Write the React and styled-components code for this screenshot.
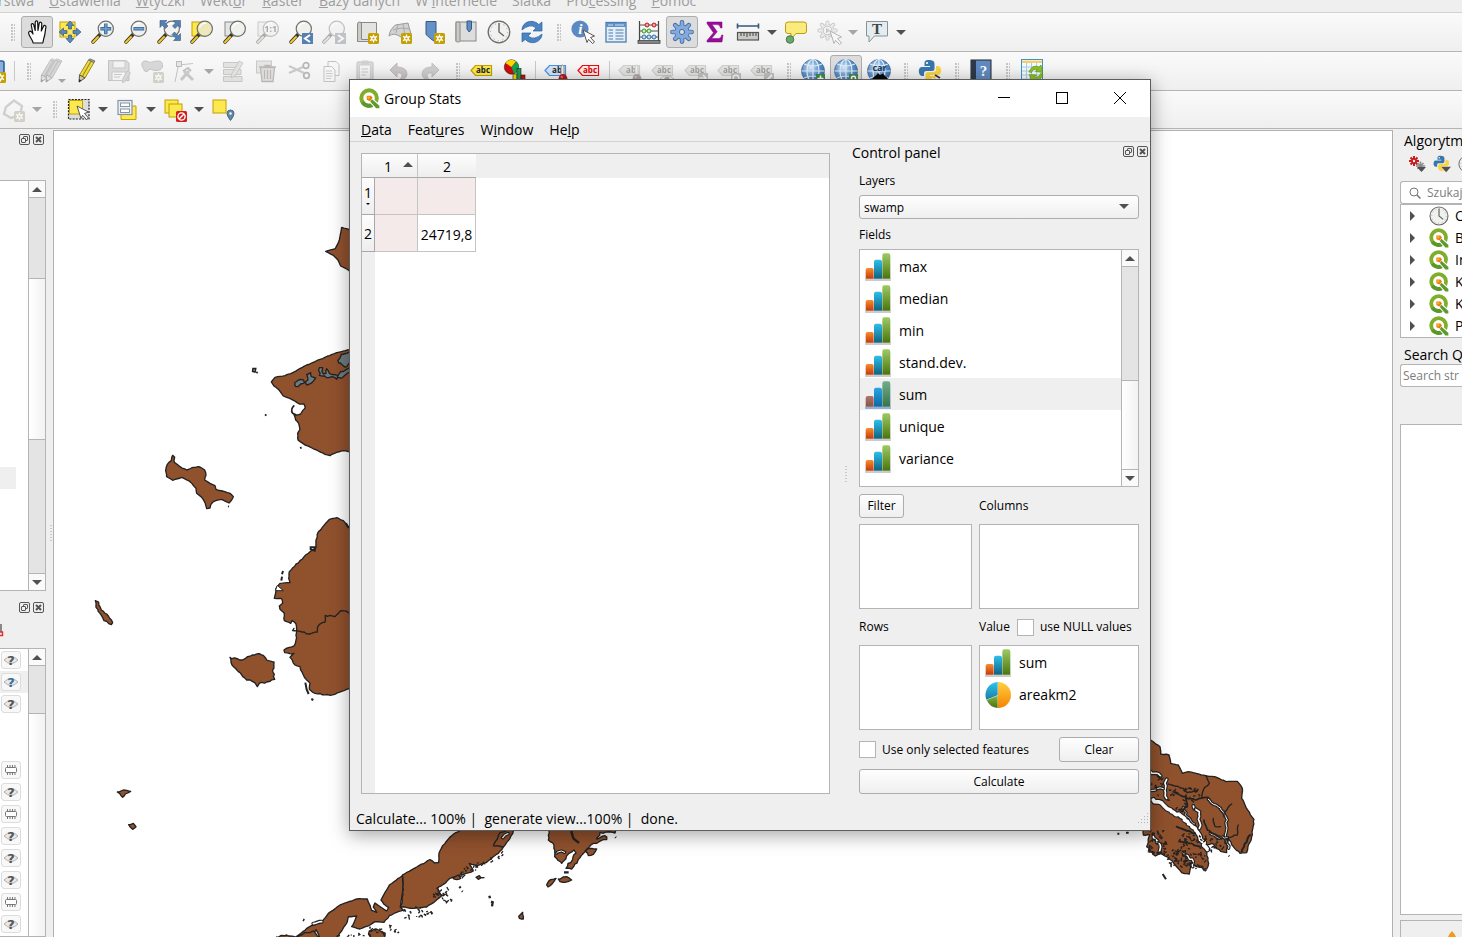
import React from "react";
import styled, { createGlobalStyle, css } from "styled-components";

const UI_FONT = '"Open Sans", "Noto Sans", "Liberation Sans", sans-serif';

const GlobalStyle = createGlobalStyle`
  *, *::before, *::after { box-sizing: border-box; }
  html, body { margin: 0; height: 100%; overflow: hidden; }
  body { background: #efefef; color: #000; font: 14px/20px ${UI_FONT}; }
  button, input, select { font: inherit; color: inherit; margin: 0; }
  ul { list-style: none; margin: 0; padding: 0; }
  svg { flex: none; }
`;

/* ---------- main window ---------- */

const Desktop = styled.div`
  position: relative;
  display: flex;
  flex-direction: column;
  height: 100vh;
  overflow: hidden;
`;

const AppMenu = styled.nav`
  display: flex;
  align-items: flex-end;
  gap: 15px;
  height: 13px;
  padding-bottom: 1px;
  border-bottom: 1px solid #d2d2d2;
  overflow: hidden;
  color: #9c9c9c;
  flex: none;
  white-space: nowrap;
`;

const AppMenuItem = styled.a`
  color: inherit;
  text-decoration: none;
`;

const ClippedMenuItem = styled(AppMenuItem)`
  display: flex;
  justify-content: flex-end;
  width: 34px;
`;

const Toolbar = styled.div`
  display: flex;
  align-items: center;
  flex: none;
  height: ${(p) => p.$height || 39}px;
  padding-left: ${(p) => p.$inset || 0}px;
  border-bottom: 1px solid #b4b4b4;
  background: linear-gradient(#fafafa, #efefef);
`;

const Cell = styled.div`
  display: flex;
  justify-content: ${(p) => (p.$clip ? "flex-end" : "center")};
  width: ${(p) => p.$clip || 33}px;
  overflow: hidden;
  flex: none;
`;

const ToolButton = styled.button`
  display: flex;
  align-items: center;
  justify-content: center;
  flex: none;
  width: 32px;
  height: 32px;
  padding: 0;
  border: 1px solid transparent;
  border-radius: 3px;
  background: none;
  ${(p) =>
    p.$active &&
    css`
      border-color: #adadad;
      background: #dcdcdc;
    `}
  &:disabled svg {
    filter: grayscale(0.85);
    opacity: 0.4;
  }
`;

const ArrowButton = styled.button`
  width: 15px;
  height: 30px;
  padding: 0;
  border: 0;
  background: none;
  display: flex;
  align-items: center;
  justify-content: center;
  flex: none;
  color: #505050;
  &:disabled { color: #a6a6a6; }
`;

const Grip = styled.span`
  flex: none;
  width: 4px;
  height: 17px;
  margin: 0 5px 0 9px;
  background: radial-gradient(circle at 1px 1px, #c6c6c6 1px, transparent 1px) 0 0 / 3px 3px;
`;

const Separator = styled.span`
  flex: none;
  width: 1px;
  height: 20px;
  margin: 0 3px 0 4px;
  background: #c8c8c8;
`;

const Body = styled.div`
  display: flex;
  flex: 1;
  min-height: 0;
`;

const MapCanvas = styled.main`
  flex: 1;
  min-width: 0;
  margin-top: 1px;
  border: 1px solid #b0b0b0;
  border-bottom: 0;
  background: #fff;
  overflow: hidden;
`;

const Dock = styled.aside`
  display: flex;
  flex-direction: column;
  flex: none;
  width: ${(p) => p.$width}px;
  overflow: hidden;
  white-space: nowrap;
`;

const LeftDockRow = styled.div`
  display: flex;
  align-items: center;
  flex: 1;
  min-height: 0;
`;

const LeftDockColumn = styled.div`
  display: flex;
  flex-direction: column;
  width: 46px;
  height: 100%;
`;

const DockHeader = styled.header`
  display: flex;
  flex-direction: column;
  justify-content: space-between;
  flex: none;
  height: ${(p) => p.$height}px;
  padding-top: ${(p) => p.$top}px;
  padding-left: ${(p) => p.$left || 0}px;
`;

const DockActions = styled.div`
  display: flex;
  justify-content: flex-end;
  gap: 3px;
  padding-right: 2px;
`;

const MiniButton = styled.button`
  display: flex;
  padding: 0;
  border: 0;
  background: none;
`;

const TreeFrame = styled.div`
  display: flex;
  flex: ${(p) => (p.$height ? `0 0 ${p.$height}px` : "1")};
  border: 1px solid #b4b4b4;
  border-left: 0;
  background: #fff;
  min-height: 0;
`;

const TreeBody = styled.ul`
  flex: 1;
  min-width: 0;
  overflow: hidden;
  padding-top: ${(p) => p.$top || 0}px;
`;

const SelectedStub = styled.li`
  width: 16px;
  height: 22px;
  background: #efefef;
`;

const AlgRow = styled.li`
  display: flex;
  align-items: center;
  height: 22px;
  padding-left: 1px;
  background: ${(p) => (p.$selected ? "#efefef" : "none")};
`;

const AlgButton = styled.button`
  display: flex;
  align-items: center;
  justify-content: center;
  width: 20px;
  height: 18px;
  padding: 0;
  border: 1px solid #dcdcdc;
  border-radius: 3px;
  background: #f8f8f8;
`;

/* ---------- scroll bar ---------- */

const ScrollTrack = styled.div`
  display: flex;
  flex-direction: column;
  flex: none;
  width: 17px;
  border-left: 1px solid #b4b4b4;
  background: #e4e4e4;
`;

const ScrollButton = styled.button`
  display: flex;
  align-items: center;
  justify-content: center;
  flex: none;
  height: 16px;
  padding: 0;
  border: 0;
  color: #505050;
  background: #fafafa;
`;

const ScrollGap = styled.span`
  flex: ${(p) => p.$size};
  min-height: 0;
  border-top: 1px solid #b4b4b4;
`;

const ScrollThumb = styled.span`
  flex: ${(p) => p.$size};
  min-height: 0;
  border-top: 1px solid #b4b4b4;
  background: linear-gradient(90deg, #fff, #f2f2f2);
`;

function ScrollBar({ before, thumb, after, hideDown }) {
  return (
    <ScrollTrack>
      <ScrollButton type="button" aria-label="Scroll up"><Triangle up /></ScrollButton>
      <ScrollGap $size={before} />
      <ScrollThumb $size={thumb} />
      {after > 0 && <ScrollGap $size={after} />}
      {!hideDown && (
        <ScrollEnd>
          <ScrollButton type="button" aria-label="Scroll down"><Triangle /></ScrollButton>
        </ScrollEnd>
      )}
    </ScrollTrack>
  );
}

const ScrollEnd = styled.div`
  display: grid;
  flex: none;
  border-top: 1px solid #b4b4b4;
`;

const SplitterDots = styled.span`
  flex: none;
  width: 2px;
  height: 17px;
  margin-left: ${(p) => p.$left || 0}px;
  background: repeating-linear-gradient(#c8c8c8 0 1px, transparent 1px 3px);
`;

/* ---------- right dock ---------- */

const DockTitle = styled.h2`
  margin: 0;
  font: 14px/20px ${UI_FONT};
`;

const IconRow = styled.div`
  display: flex;
  align-items: center;
  gap: 7px;
  height: 29px;
  padding: 0 0 5px 15px;
`;

const SearchField = styled.div`
  display: flex;
  align-items: center;
  gap: 6px;
  flex: none;
  height: 23px;
  margin-left: 7px;
  padding-left: ${(p) => p.$pad}px;
  border: 1px solid #b4b4b4;
  border-right: 0;
  border-radius: 3px 0 0 3px;
  background: #fff;
`;

const BareInput = styled.input`
  width: 100%;
  min-width: 0;
  padding: 0;
  border: 0;
  outline: 0;
  background: none;
  font-size: 12px;
  &::placeholder { color: #7c7c7c; opacity: 1; }
`;

const Providers = styled.ul`
  flex: none;
  margin-left: 7px;
  border: 1px solid #b4b4b4;
  border-right: 0;
  background: #fff;
`;

const Provider = styled.li`
  display: flex;
  align-items: center;
  height: 22px;
  padding-left: 9px;
  svg + svg { margin: 0 6px 0 14px; }
`;

const Results = styled.div`
  flex: 1;
  margin: 37px 0 5px 7px;
  border: 1px solid #b4b4b4;
  border-right: 0;
  background: #fff;
`;

const LogTab = styled.div`
  display: flex;
  align-items: flex-end;
  justify-content: flex-end;
  flex: none;
  height: 17px;
  margin-left: 7px;
  padding-right: 5px;
  border: 1px solid #b4b4b4;
  border-width: 1px 0 0 1px;
  overflow: hidden;
`;

/* ---------- Group Stats window ---------- */

const Dialog = styled.section`
  position: absolute;
  left: 349px;
  top: 79px;
  width: 802px;
  height: 752px;
  display: flex;
  flex-direction: column;
  border: 1px solid #5c5c5c;
  background: #efefef;
  box-shadow: 0 4px 18px rgba(0, 0, 0, 0.36);
`;

const TitleBar = styled.header`
  display: flex;
  align-items: center;
  flex: none;
  gap: 4px;
  height: 37px;
  padding-left: 9px;
  background: #fff;
`;

const DialogTitle = styled.h1`
  flex: 1;
  margin: 0;
  font: 14px/20px ${UI_FONT};
`;

const WindowActions = styled.div`
  display: flex;
  align-self: flex-start;
  padding-right: 1px;
`;

const WindowButton = styled.button`
  display: flex;
  align-items: center;
  justify-content: center;
  width: 58px;
  height: 36px;
  padding: 0;
  border: 0;
  background: none;
`;

const DialogMenu = styled.nav`
  display: flex;
  align-items: center;
  flex: none;
  gap: 16px;
  height: 25px;
  padding: 2px 0 0 11px;
  border-bottom: 1px solid #d2d2d2;
`;

const DialogMenuItem = styled.a`
  color: inherit;
  text-decoration: none;
`;

const Workspace = styled.div`
  display: flex;
  align-items: center;
  flex: 1;
  min-height: 0;
`;

const TableFrame = styled.div`
  align-self: stretch;
  flex: 1;
  margin: 11px 0 13px 11px;
  border: 1px solid #b4b4b4;
  background:
    linear-gradient(#efefef, #efefef) 0 0 / 100% 24px no-repeat,
    linear-gradient(#efefef, #efefef) 0 0 / 13px 100% no-repeat,
    #fff;
`;

const StatsTable = styled.table`
  border-collapse: separate;
  border-spacing: 0;
  table-layout: fixed;
  width: 114px;
`;

const headerCell = css`
  padding: 0;
  font-weight: 400;
  border: 0 solid #a8a8a8;
  background: linear-gradient(#fdfdfd, #eee);
`;

const ColHead = styled.th`
  ${headerCell}
  width: ${(p) => p.$width}px;
  height: 24px;
  border-bottom-width: 1px;
  border-right: ${(p) => (p.$last ? "0" : "1px solid #c4c4c4")};
`;

const HeadContent = styled.div`
  display: flex;
  align-items: center;
  justify-content: flex-end;
  gap: 11px;
  padding: 2px 4px 0 0;
  svg { color: #505050; margin-bottom: 4px; }
`;

const PlainHead = styled.div`
  padding-top: 2px;
`;

const CornerHead = styled.td`
  ${headerCell}
  width: 13px;
  border-bottom-width: 1px;
`;

const RowHead = styled.th`
  ${headerCell}
  height: 37px;
  border-width: 0 1px 1px 0;
`;

const RowHeadContent = styled.div`
  display: flex;
  flex-direction: column;
  align-items: center;
  padding-bottom: 4px;
`;

const DataCell = styled.td`
  height: 37px;
  padding: 1px 0 0;
  text-align: center;
  border: 0 solid #c4c4c4;
  border-width: 0 1px 1px 0;
  background: ${(p) => (p.$tinted ? "#f5eaea" : "#fff")};
`;

const ControlPanel = styled.aside`
  align-self: stretch;
  display: flex;
  flex-direction: column;
  flex: none;
  width: 303px;
  font-size: 12px;
`;

const PanelHeader = styled.header`
  display: flex;
  align-items: flex-start;
  justify-content: space-between;
  height: 20px;
  padding-left: 5px;
  margin: 1px 0 8px;
`;

const PanelActions = styled.div`
  padding-top: 3px;
`;

const PanelForm = styled.form`
  display: flex;
  flex-direction: column;
  padding: 0 11px 0 12px;
`;

const Caption = styled.label`
  line-height: 20px;
`;

const SelectWrap = styled.div`
  position: relative;
  display: flex;
  margin: 4px 0 6px;
`;

const LayerSelect = styled.select`
  appearance: none;
  width: 100%;
  height: 24px;
  padding: 2px 4px 0;
  border: 1px solid #adadad;
  border-radius: 3px;
  background: linear-gradient(#fefefe, #efefef);
`;

const SelectArrow = styled.span`
  position: absolute;
  right: 10px;
  top: 9px;
  display: flex;
  color: #505050;
  pointer-events: none;
`;

const FieldsFrame = styled.div`
  display: flex;
  height: 238px;
  margin-top: 4px;
  border: 1px solid #b4b4b4;
  background: #fff;
`;

const FieldList = styled.ul`
  flex: 1;
  font-size: 14px;
`;

const Field = styled.li`
  display: flex;
  align-items: center;
  gap: 8px;
  height: 32px;
  padding: 2px 0 0 5px;
  background: ${(p) => (p.$selected ? "#efefef" : "none")};
`;

const DropGrid = styled.div`
  display: grid;
  grid-template-columns: 113px 1fr;
  column-gap: 7px;
  margin-top: 7px;
`;

const DropHead = styled.div`
  display: flex;
  align-items: center;
  gap: 7px;
  height: ${(p) => p.$height}px;
  padding-bottom: ${(p) => p.$below || 0}px;
  white-space: nowrap;
`;

const DropBox = styled.ul`
  height: 85px;
  border: 1px solid #b4b4b4;
  background: #fff;
  font-size: 14px;
`;

const PushButton = styled.button`
  height: ${(p) => p.$height || 25}px;
  width: ${(p) => (p.$width ? `${p.$width}px` : "auto")};
  padding: 0;
  border: 1px solid #adadad;
  border-radius: 3px;
  background: linear-gradient(#fefefe, #efefef);
`;

const Check = styled.input`
  appearance: none;
  flex: none;
  width: 17px;
  height: 17px;
  border: 1px solid #b4b4b4;
  background: #fff;
`;

const CheckLabel = styled.label`
  display: flex;
  align-items: center;
  gap: 6px;
`;

const OptionRow = styled.div`
  display: flex;
  align-items: center;
  justify-content: space-between;
  margin: 7px 0;
`;

const StatusBar = styled.footer`
  display: flex;
  align-items: center;
  justify-content: space-between;
  flex: none;
  height: 23px;
  padding-left: 6px;
  white-space: pre;
`;

/* ---------- small glyphs ---------- */

function Triangle({ up, small }) {
  const w = small ? 4 : 10;
  return (
    <svg width={w} height={w / 2} viewBox="0 0 10 5" aria-hidden="true">
      <path d={up ? "M0 5L5 0L10 5Z" : "M0 0L10 0L5 5Z"} fill="currentColor" />
    </svg>
  );
}

function RightTriangle() {
  return (
    <svg width="5" height="10" viewBox="0 0 5 10" aria-hidden="true">
      <path d="M0 0L5 5L0 10Z" fill="#505050" />
    </svg>
  );
}

function FloatGlyph() {
  return (
    <svg width="11" height="11" viewBox="0 0 11 11" fill="none" stroke="#555" aria-hidden="true">
      <rect x=".5" y=".5" width="10" height="10" rx="1.5" />
      <rect x="4.5" y="2.5" width="4" height="4" rx=".5" />
      <rect x="2.5" y="4.5" width="4" height="4" rx=".5" fill="#efefef" />
    </svg>
  );
}

function CloseGlyph() {
  return (
    <svg width="11" height="11" viewBox="0 0 11 11" fill="none" stroke="#555" aria-hidden="true">
      <rect x=".5" y=".5" width="10" height="10" rx="1.5" />
      <path d="M3 3L8 8M8 3L3 8" strokeWidth="2" />
    </svg>
  );
}

function DockButtons() {
  return (
    <DockActions>
      <MiniButton type="button" aria-label="Float"><FloatGlyph /></MiniButton>
      <MiniButton type="button" aria-label="Close"><CloseGlyph /></MiniButton>
    </DockActions>
  );
}

function QLogo({ size = 20 }) {
  return (
    <svg width={size} height={size} viewBox="0 0 20 20" aria-hidden="true">
      <circle cx="9.6" cy="9.6" r="7.4" fill="none" stroke="#7fae2a" strokeWidth="3.8" />
      <path d="M3.4 13.7A7.4 7.4 0 0 0 14 15.5" fill="none" stroke="#5a982b" strokeWidth="3.8" />
      <path d="M9.5 9.3L13 9.5L19.7 16V19.8H15.4L9.6 13.2Z" fill="#fff" />
      <path d="M12.4 10.8L19.4 17V19.4H16.4L10.8 13Z" fill="#5c9a2c" />
      <path d="M7.4 7.4H11.4L13 9.4L10.6 12.6L7.4 11.2Z" fill="#ee7913" />
      <circle cx="9.2" cy="9.2" r="1.3" fill="#f4b01c" />
    </svg>
  );
}

function Bars({ tinted }) {
  const id = tinted ? "t" : "n";
  const c = tinted
    ? ["#a9776a", "#8d5348", "#27a6e8", "#0d67a0", "#6fae86", "#35744f", "#8fb0d8"]
    : ["#f58d32", "#c43c0c", "#2cc0ee", "#12627f", "#9ccb62", "#4a7410", "#cbcbcb"];
  return (
    <svg width="26" height="28" viewBox="0 0 78 84" aria-hidden="true">
      <defs>
        {[0, 2, 4].map((i) => (
          <linearGradient key={i} id={`bar${id}${i}`} x1="0" y1="0" x2="0" y2="1">
            <stop offset="0" stopColor={c[i]} />
            <stop offset="1" stopColor={c[i + 1]} />
          </linearGradient>
        ))}
      </defs>
      <rect x="0" y="77" width="78" height="7" rx="2" fill={c[6]} />
      <path d="M2 77V51Q2 45 8 45H21Q26 45 26 51V77Z" fill={`url(#bar${id}0)`} />
      <path d="M27 77V26Q27 20 33 20H45Q51 20 51 26V77Z" fill={`url(#bar${id}2)`} />
      <path d="M52 77V8Q52 1 58 1H70Q76 1 76 8V77Z" fill={`url(#bar${id}4)`} />
    </svg>
  );
}

function Pie() {
  return (
    <svg width="26" height="26" viewBox="0 0 78 78" aria-hidden="true">
      <defs>
        <linearGradient id="pieY" x1="0" y1="0" x2="0" y2="1"><stop offset="0" stopColor="#ffd042" /><stop offset="1" stopColor="#f58200" /></linearGradient>
        <linearGradient id="pieB" x1="0" y1="0" x2="0" y2="1"><stop offset="0" stopColor="#2fc3ee" /><stop offset="1" stopColor="#1b7ea6" /></linearGradient>
        <linearGradient id="pieG" x1="0" y1="0" x2="0" y2="1"><stop offset="0" stopColor="#87b540" /><stop offset="1" stopColor="#477010" /></linearGradient>
      </defs>
      <path d="M39 0A39 39 0 0 1 39 78Z" fill="url(#pieY)" />
      <path d="M38 0A39 39 0 0 0 4 53L38 40Z" fill="url(#pieB)" />
      <path d="M38 41V78A39 39 0 0 1 5 54Z" fill="url(#pieG)" />
    </svg>
  );
}

/* ---------- toolbar icons, 24 x 24 ---------- */

const Glass = ({ fill = "#eef1ec" }) => (
  <>
    <path d="M9 14.5L2 22" stroke="#3b3b2c" strokeWidth="3.6" strokeLinecap="round" />
    <path d="M7 17L2 22.2" stroke="#f4c62c" strokeWidth="2" strokeLinecap="round" />
    <circle cx="14.8" cy="8.8" r="7.6" fill={fill} stroke="#6f706c" strokeWidth="1.2" />
    <path d="M9.5 7.5A5.8 5.8 0 0 1 16 3.4" fill="none" stroke="#fff" strokeWidth="1.4" />
  </>
);

const Star = ({ x = 13, y = 13 }) => (
  <g transform={`translate(${x} ${y})`}>
    <rect width="11" height="11" rx="1.6" fill="#c4a000" />
    <path d="M5.5 1.4V9.6M2 3.4L9 7.6M9 3.4L2 7.6" stroke="#fff" strokeWidth="1.3" />
    <circle cx="5.5" cy="5.5" r="2.4" fill="#fff" />
    <circle cx="5.5" cy="5.5" r="1.1" fill="#c4a000" />
  </g>
);

const Cursor = ({ x = 12, y = 10 }) => (
  <path transform={`translate(${x} ${y})`} d="M0 0L11.5 6L7.5 7.5L11.5 12L9.5 13.5L5.6 9.3L4 12.5Z" fill="#fff" stroke="#555" strokeWidth="1" />
);

const Tag = ({ fill, stroke, ink = "#222", children = "abc" }) => (
  <>
    <path d="M1 11.5L5.5 6.5H21.5V16.5H5.5Z" fill={fill} stroke={stroke} strokeWidth="1.2" />
    <text x="13" y="14" fontSize="8" fontWeight="700" fontFamily="Open Sans, sans-serif" textAnchor="middle" fill={ink}>{children}</text>
  </>
);

const Pin = () => (
  <>
    <path d="M17 16V8Q17 6 18.5 6Q20 6 20 8V16" fill="#eee" stroke="#888" />
    <circle cx="19" cy="19.5" r="4.4" fill="#b01818" />
    <circle cx="17.8" cy="18" r="1.2" fill="#e06a6a" />
  </>
);

const Pencil = ({ body = "#eddc3c", edge = "#9c8820" }) => (
  <>
    <path d="M14.5 1L20 3.5L11 19L5.5 16Z" fill={body} stroke={edge} />
    <path d="M17 2.3L8.3 17.4" stroke={edge} strokeWidth="1.1" />
    <path d="M5.5 16L11 19L5 23Z" fill="#d8c8a0" stroke="#555" />
    <path d="M5.2 20L7.2 21.4L5 23.4Z" fill="#222" />
    <path d="M14.5 1L16 -.2L21 2L20 3.5Z" fill="#a8a8a0" stroke="#666" strokeWidth=".8" />
  </>
);

const Cog = ({ fill, edge, hole, cx = 12, cy = 12, scale = 1 }) => (
  <g transform={`translate(${cx} ${cy}) scale(${scale})`} strokeLinecap="round">
    <path d="M0 -9.6V9.6M-9.6 0H9.6M-6.8 -6.8L6.8 6.8M6.8 -6.8L-6.8 6.8" stroke={edge} strokeWidth="4.6" />
    <circle r="7.6" fill={edge} />
    <path d="M0 -9.6V9.6M-9.6 0H9.6M-6.8 -6.8L6.8 6.8M6.8 -6.8L-6.8 6.8" stroke={fill} strokeWidth="2.8" />
    <circle r="6.8" fill={fill} />
    <circle r="2.6" fill={hole} stroke={edge} />
  </g>
);

const Globe = ({ id }) => (
  <>
    <defs>
      <radialGradient id={id} cx=".4" cy=".35" r=".75">
        <stop offset="0" stopColor="#dcecf8" /><stop offset=".5" stopColor="#5f93cc" /><stop offset="1" stopColor="#2d5f9c" />
      </radialGradient>
    </defs>
    <circle cx="12" cy="12" r="11.5" fill={`url(#${id})`} stroke="#456a94" strokeWidth=".8" />
    <path d="M12 .5V23.5M.5 12H23.5M3 5Q12 9 21 5M3 19Q12 15 21 19" stroke="#dfeefa" strokeWidth="1.2" fill="none" />
    <ellipse cx="12" cy="12" rx="6" ry="11.5" fill="none" stroke="#dfeefa" strokeWidth="1.2" />
  </>
);

const Python = () => (
  <>
    <path d="M11 1C6.5 1 6.5 3 6.5 4.5V7H12V8H4C1.5 8 .8 10.5 .8 12.5S2 17 4 17H6V14Q6 12 8.5 12H14Q16.5 12 16.5 9.5V4.5C16.5 2 14 1 11 1Z" fill="#3877ad" />
    <circle cx="9" cy="4" r="1.1" fill="#fff" />
    <path d="M13 23C17.5 23 17.5 21 17.5 19.5V17H12V16H20C22.5 16 23.2 13.5 23.2 11.5S22 7 20 7H18V10Q18 13 15.5 13H10Q7.5 13 7.5 15.5V19.5C7.5 22 10 23 13 23Z" fill="#fcd344" />
    <circle cx="15" cy="20" r="1.1" fill="#fff" />
  </>
);

const ARROWS4 = (
  <g fill="#5d87b8" stroke="#36597f" strokeWidth=".7">
    <path d="M12 1L16 5.5H13.5V9H10.5V5.5H8Z" />
    <path d="M12 23L16 18.5H13.5V15H10.5V18.5H8Z" />
    <path d="M1 12L5.5 8V10.5H9V13.5H5.5V16Z" />
    <path d="M23 12L18.5 8V10.5H15V13.5H18.5V16Z" />
  </g>
);

const ICONS = {
  hand: <path d="M8.2 23C7.7 20 4.8 17.4 3.8 13.8C3 11.4 5 10.4 6.6 12L8 14L6.3 5.4C6 3.4 8.3 3 8.8 5L10.2 10.5V2.6C10.2.4 12.6.4 12.7 2.6L13 10.4L14.2 3.4C14.7 1.5 17 2 16.8 4L16.3 11L18.4 6.4C19.3 4.7 21.4 5.4 20.9 7.4C20 11 20.4 14.6 18.8 18.3L17.8 23Z" fill="#fff" stroke="#111" strokeWidth="1.2" strokeLinejoin="round" />,
  panSel: <><rect x="2" y="2" width="15" height="15" fill="#fce94f" stroke="#c4a000" />{ARROWS4}</>,
  zoomIn: <><Glass /><path d="M14.8 3.4V14.2M9.4 8.8H20.2" stroke="#36659c" strokeWidth="3.4" /><path d="M14.8 4V13.6M10 8.8H19.6" stroke="#729fcf" strokeWidth="1.6" /></>,
  zoomOut: <><Glass /><path d="M9.4 8.8H20.2" stroke="#36659c" strokeWidth="3.4" /><path d="M10 8.8H19.6" stroke="#729fcf" strokeWidth="1.6" /></>,
  zoomFull: <><Glass fill="#f2f2f0" /><g fill="#5580b2" stroke="#36597f" strokeWidth=".6"><path d="M3 .5H10L7.8 2.7L11 6L8.5 8.5L5.2 5.2L3 7.5Z" /><path d="M23.5 .5V7.5L21.3 5.2L18 8.5L15.5 6L18.8 2.7L16.5 .5Z" /><path d="M23.5 20.5H16.5L18.8 18.3L15 14.5L17.5 12L21.3 15.8L23.5 13.5Z" /></g></>,
  zoomSel: <><rect x="2" y="2" width="14" height="14" fill="#fce94f" stroke="#c4a000" /><Glass fill="#ede9bd" /></>,
  zoomLayer: <><rect x="2" y="2" width="14" height="14" fill="#e4e6e4" stroke="#888" /><Glass /></>,
  zoomNative: <><rect x="2" y="2" width="14" height="14" fill="#e4e6e4" stroke="#888" /><Glass /><text x="14.8" y="12" fontSize="9" fontWeight="700" fontFamily="Open Sans, sans-serif" textAnchor="middle" fill="#333">1:1</text></>,
  zoomLast: <><Glass /><rect x="13" y="13" width="11" height="11" fill="#5580b2" /><path d="M21 15L16 18.5L21 22" fill="none" stroke="#fff" strokeWidth="2" /></>,
  zoomNext: <><Glass /><rect x="13" y="13" width="11" height="11" fill="#5580b2" /><path d="M16 15L21 18.5L16 22" fill="none" stroke="#fff" strokeWidth="2" /></>,
  newMap: <><path d="M5 2.5H21.5V19.5H5" fill="#e3e3e1" stroke="#888a85" /><path d="M2.5 21.5V4Q2.5 2 4.5 2T6.5 4V21.5Z" fill="#c9cbc6" stroke="#888a85" /><path d="M2.5 21.5H18V19.5H6.5" fill="#ddd" stroke="#888a85" /><Star /></>,
  new3d: <><path d="M7.5 5L20 3L23 14L13 17Q6 12 1 16Q2 9 7.5 5Z" fill="#d2d2d0" stroke="#999" /><path d="M5 10Q12 7 22 9M10 4.5L8 13M15 4L17 15" stroke="#aaa" fill="none" /><Star /></>,
  newBookmark: <><path d="M5 1.5H15V22.5L10 19L5 14.5Z" fill="#6592c6" stroke="#36597f" /><Star /></>,
  bookmarks: <><rect x="2" y="2" width="20" height="19" fill="#ddd" stroke="#888a85" /><rect x="2" y="2" width="4" height="20" rx="1.5" fill="#c9cbc6" stroke="#888a85" /><path d="M13 1V9L15.2 12L17.5 9V1Z" fill="#5f8dc3" stroke="#36597f" /></>,
  clock: <><circle cx="12" cy="12" r="10.8" fill="#f1f1ef" stroke="#6b6c68" strokeWidth="1.3" /><path d="M12 3V12L17 16" fill="none" stroke="#666" strokeWidth="1.4" /><circle cx="12" cy="12" r="8.6" fill="none" stroke="#999" strokeDasharray="1 3.5" /></>,
  refresh: <g fill="#4b84c2" stroke="#2c62a0" strokeWidth=".7"><path d="M2 10C2 4 8 .5 13 1.5Q16.5 2 18.8 4.5L22 2V11H13L16 8Q13 5.3 9.5 6Q5 7 2 10Z" /><path d="M22 14C22 20 16 23.5 11 22.5Q7.5 22 5.2 19.5L2 22V13H11L8 16Q11 18.7 14.5 18Q19 17 22 14Z" /></g>,
  identify: <><circle cx="9" cy="9" r="8.6" fill="#5b8ac2" /><text x="9.3" y="14.3" fontSize="15" fontWeight="700" fontStyle="italic" fontFamily="Liberation Serif, serif" textAnchor="middle" fill="#fff">i</text><Cursor /></>,
  table: <><rect x="2" y="2.5" width="20" height="19.5" fill="#e4eef8" stroke="#4d7db0" strokeWidth="1.3" /><path d="M2 3H22V7H2Z" fill="#5f90c6" /><path d="M4.5 10H9M4.5 13H9M4.5 16H9M4.5 19H9M11.5 10H19.5M11.5 13H19.5M11.5 16H19.5M11.5 19H19.5" stroke="#4d7db0" strokeWidth="1.2" /><path d="M4 5H9M11 5H20" stroke="#cfe0f2" /></>,
  abacus: <><path d="M2.5 1V21M21.5 1V21" stroke="#444" strokeWidth="1.2" /><rect x="1" y="20.5" width="22" height="2.8" fill="#888" stroke="#444" strokeWidth=".8" /><path d="M2 5H22M2 11H22M2 17H22" stroke="#555" /><g fill="#f4a0a0" stroke="#c01818"><circle cx="10" cy="5" r="2" /><circle cx="17" cy="5" r="2" /></g><g fill="#c4f0b0" stroke="#2e9a2e"><circle cx="7" cy="11" r="2" /><circle cx="12" cy="11" r="2" /></g><g fill="#c0dcf4" stroke="#2f6ca8"><circle cx="7" cy="17" r="2" /><circle cx="12" cy="17" r="2" /><circle cx="17" cy="17" r="2" /></g></>,
  gear: <Cog fill="#83aadb" edge="#3f6fac" hole="#dcdcdc" />,
  sigma: <path d="M4 2H19V8H17.5Q17 4.6 14 4.6H9L14.2 11.8L8.5 18.6H15.5Q18 18.6 18.8 15H20L19 22H4V20.5L10.5 12.8L4 3.5Z" fill="#980c98" stroke="#7a067a" strokeWidth=".5" />,
  measure: <><path d="M1 6H23M1.5 3.5V8.5M22.5 3.5V8.5" stroke="#36567c" strokeWidth="1.6" /><rect x="1.5" y="12.5" width="21" height="7.5" fill="#c8cac6" stroke="#555" strokeWidth="1.2" /><path d="M5 13V16M8 13V16M11 13V17M14 13V16M17 13V16M20 13V16" stroke="#444" /></>,
  tip: <><path d="M4 2H20Q22.5 2 22.5 4.5V11Q22.5 13.5 20 13.5H12L7 19V13.5H4Q1.5 13.5 1.5 11V4.5Q1.5 2 4 2Z" fill="#fbea7c" stroke="#b89c14" /><circle cx="6" cy="19.5" r="3.8" fill="#68a868" stroke="#48784c" /></>,
  runAction: <><Cog fill="#e0e0e0" edge="#777" hole="#eee" cx={10.5} cy={10.5} scale={0.85} /><circle cx="10.5" cy="10.5" r="4.4" fill="#eee" stroke="#777" /><path d="M9 7.8L13.4 10.5L9 13.2Z" fill="#888" /><Cursor x="13" y="11" /></>,
  textNote: <><path d="M1.5 1.5H22.5V16H9.5L4 22V16H1.5Z" fill="#e3ecef" stroke="#8a9296" /><text x="12" y="13.6" fontSize="15" fontWeight="700" fontFamily="Liberation Serif, serif" textAnchor="middle" fill="#444">T</text></>,
  newLayer: <><rect x="5" y="2" width="17" height="17" rx="2" fill="#88b0dc" stroke="#2f5f94" strokeWidth="1.6" /><Star /></>,
  pencils: <><g transform="translate(-5 0)"><Pencil body="#b8a49e" edge="#7d6c66" /></g><Pencil body="#b8a49e" edge="#7d6c66" /><path d="M17 20H25L21 24Z" fill="#333" /></>,
  pencil: <Pencil />,
  save: <><path d="M1.5 1.5H19L22 4V21.5H1.5Z" fill="#b4b4b0" stroke="#777" /><rect x="6" y="2" width="12" height="7" fill="#eee" stroke="#888" /><rect x="5" y="13" width="14" height="8.5" fill="#f4f4f4" stroke="#888" /><path d="M7 15.5H15M7 18H13" stroke="#888" /><path d="M20 12L23.5 14L18 22.5L15.5 23.5L15.6 20.5Z" fill="#d8a8a0" stroke="#a07870" /></>,
  blob: <><path d="M2 7Q1 1.5 6 2Q10 4.5 14 2.5Q22 .5 22.5 5.5Q23 11 17 11.5Q13 11.5 10 10Q7 14 4.5 12Q3.5 9.5 2 7Z" fill="#aaa" stroke="#777" /><Star /></>,
  vertex: <><path d="M2 23L5.5 6L20 4.5" fill="none" stroke="#777" /><rect x="3.5" y="2.5" width="5" height="5" fill="#ccc" stroke="#666" /><path d="M8 21L16 12M20 21L11 12" stroke="#888" strokeWidth="3" /><path d="M10 12L15 9L18 12" fill="none" stroke="#777" strokeWidth="2" /></>,
  editForm: <><path d="M2.5 3.5H17V8.5H2.5ZM2.5 10.5H20V15.5H2.5ZM2.5 17.5H21V22.5H2.5Z" fill="#c9c9a8" stroke="#85856e" /><path d="M18 2L22 4L14 17L10.5 19L10.6 15Z" fill="#ccc4c4" stroke="#888" /></>,
  trash: <><rect x="2.5" y="2" width="15" height="12" fill="#ccb" stroke="#887" /><path d="M5 8H22M11 8V6.5H16V8M6.5 8.5L8 22.5H19L20.5 8.5Z" fill="#dcb4b4" stroke="#a05050" strokeWidth="1.3" /><path d="M10.5 11V20M13.5 11V20M16.5 11V20" stroke="#a05050" strokeWidth="1.2" /></>,
  cut: <><path d="M2 7L17 14M2 14L16 8" stroke="#888" strokeWidth="2" /><circle cx="19" cy="6.5" r="2.8" fill="none" stroke="#885050" strokeWidth="1.8" /><circle cx="19.5" cy="16.5" r="2.8" fill="none" stroke="#885050" strokeWidth="1.8" /></>,
  copy: <><path d="M8 2.5H16L19 5.5V16.5H8Z" fill="#f6f6f6" stroke="#777" /><path d="M4 7.5H11.5L15 11V22.5H4Z" fill="#f6f6f6" stroke="#777" /><path d="M6 12H12M6 14.5H12.5M6 17H12.5M6 19.5H11" stroke="#888" /></>,
  paste: <><rect x="4" y="3" width="16" height="19.5" rx="1" fill="#b8b8a0" stroke="#777" /><rect x="6.5" y="6" width="11" height="14" fill="#f6f6f6" stroke="#999" /><rect x="8.5" y="1.5" width="7" height="4" fill="#999" /><path d="M8.5 10H15M8.5 13H15M8.5 16H13" stroke="#888" /></>,
  undo: <path d="M4 11L11 4V8Q21 8 21 15.5Q20 20.5 13 21.5Q17 18 16 15.5Q15 13.5 11 13.8V18Z" fill="#bc7868" stroke="#97594c" />,
  redo: <path d="M20 11L13 4V8Q3 8 3 15.5Q4 20.5 11 21.5Q7 18 8 15.5Q9 13.5 13 13.8V18Z" fill="#859d85" stroke="#637d63" />,
  label: <Tag fill="#fce94f" stroke="#c4a000" />,
  diagram: <><circle cx="8.5" cy="8" r="7.2" fill="#d00c0c" stroke="#222" strokeWidth=".6" /><path d="M8.5 8L2.5 4A7.2 7.2 0 0 1 13 2.4Z" fill="#fcd800" /><path d="M8.5 8L13 2.4A7.2 7.2 0 0 1 11 14.8Z" fill="#18a050" /><g stroke="#222" strokeWidth=".6"><rect x="10" y="15" width="4" height="8" fill="#fcd800" /><rect x="14" y="9.5" width="4" height="13.5" fill="#18a050" /><rect x="18" y="16" width="4" height="7" fill="#d00c0c" /></g></>,
  labelPin: <><Tag fill="#cfe4fb" stroke="#4a90e2">ab</Tag><Pin /></>,
  labelRed: <Tag fill="#ffecec" stroke="#ee0c0c" ink="#d00" />,
  dimPin: <><Tag fill="#cdcbb0" stroke="#999">ab</Tag><Pin /></>,
  dimEye: <><Tag fill="#cdcbb0" stroke="#999" /><path d="M9 20Q15 13 23 20Q15 26 9 20Z" fill="#eee" stroke="#666" /><circle cx="16" cy="20" r="2.6" fill="#444" /></>,
  dimMove: <><Tag fill="#cdcbb0" stroke="#999" /><rect x="14" y="14" width="10" height="10" fill="#777" /><path d="M15 19H22M19 16L22 19L19 22" stroke="#fff" strokeWidth="1.6" fill="none" /></>,
  dimRotate: <><Tag fill="#cdcbb0" stroke="#999" /><rect x="14" y="14" width="10" height="10" fill="#777" /><circle cx="19" cy="19" r="2.8" stroke="#fff" strokeWidth="1.6" fill="none" /></>,
  dimEdit: <><Tag fill="#cdcbb0" stroke="#999" /><rect x="14" y="14" width="10" height="10" fill="#777" /><path d="M22 16L16 22" stroke="#fff" strokeWidth="1.8" /></>,
  globeAdd: <><Globe id="ga" /><rect x="15" y="15" width="9" height="9" fill="#3f8a4c" /><path d="M19.5 16.5V22.5M16.5 19.5H22.5" stroke="#fff" strokeWidth="1.6" /></>,
  globeSearch: <><Globe id="gs" /><rect x="15" y="15" width="9" height="9" fill="#3f8a4c" /><circle cx="19.5" cy="19.3" r="2" fill="none" stroke="#fff" strokeWidth="1.5" /></>,
  globeCar: <><Globe id="gc" /><path d="M4 24Q5 18 9 16.5L11 14L13 16L16 14.5L18 17Q22 19 21 24Z" fill="#080808" /><text x="12.5" y="11.5" fontSize="9" fontWeight="700" fontFamily="Open Sans, sans-serif" textAnchor="middle" fill="#1c3657">car</text></>,
  python: <><Python /><path d="M17 16L22 19" stroke="#333" strokeWidth="1.6" /></>,
  help: <><rect x="2" y="1" width="20" height="23" fill="#5f8ac2" stroke="#222" /><rect x="2" y="1" width="5" height="23" fill="#2c3a4c" /><text x="14.4" y="16.5" fontSize="15" fontWeight="700" fontFamily="Liberation Serif, serif" textAnchor="middle" fill="#fff">?</text></>,
  sheet: <><rect x="1.5" y=".5" width="21" height="23" fill="#f6fbff" stroke="#3f94c6" /><path d="M2 1.6H22V4H2Z" fill="#f8cf6c" /><path d="M6.5 4V23M11.5 4V23M16.5 4V23M2 8H22M2 12H22M2 16H22M2 20H22" stroke="#a8d0e8" /><path d="M9 13Q12 5 19 8L21 6L22.5 13.5L15.5 12.5L17.5 10.5Q13 9.5 11.5 13.5ZM23 15Q21 23 13.5 20.5L11 22.5L9.5 15.5L16.5 16L14.5 18Q19 19 20.5 14.6Z" fill="#8cc31e" stroke="#5c8c10" strokeWidth=".6" /></>,
  polygon: <><path d="M5 9L13 2.5L21 8L19 17L10 20L3 16Z" fill="none" stroke="#999" strokeWidth="2.4" /><Star x={13} y={13} /></>,
  select: <><rect x="1.5" y="1.5" width="20.5" height="19.5" fill="#ddd" stroke="#222" strokeWidth="1.2" strokeDasharray="2 1.2" /><path d="M2.5 2.5H15.5V16H2.5Z" fill="#fce94f" stroke="#c4a000" /><Cursor x="10" y="8" /></>,
  selectForm: <><path d="M8 8H21V21.5H6V16H8Z" fill="#fce94f" stroke="#c4a000" /><rect x="3" y="2.5" width="14" height="14" fill="#eaf0f4" stroke="#8694a4" strokeWidth="1.2" /><rect x="5.5" y="5" width="9" height="3.5" fill="#fff" stroke="#8694a4" /><rect x="5.5" y="11" width="9" height="3.5" fill="#fff" stroke="#8694a4" /></>,
  deselect: <><rect x="2" y="2" width="13" height="13" fill="#fce94f" stroke="#c4a000" /><rect x="6" y="6" width="13" height="13" fill="#fce94f" stroke="#c4a000" /><rect x="13" y="13" width="11" height="11" rx="1.5" fill="#d41c1c" /><circle cx="18.5" cy="18.5" r="3.6" fill="none" stroke="#fff" strokeWidth="1.4" /><path d="M16 21L21 16" stroke="#fff" strokeWidth="1.4" /></>,
  selectLoc: <><rect x="2" y="2" width="13" height="13" fill="#fce94f" stroke="#c4a000" /><path d="M19.5 22.5Q16 18 16 15.5A3.5 3.5 0 0 1 23 15.5Q23 18 19.5 22.5Z" fill="#5f88a4" stroke="#466a84" /><circle cx="19.5" cy="15.5" r="1.2" fill="#fff" /></>,
};

function Icon({ name, size = 24 }) {
  return (
    <svg width={size} height={size} viewBox="0 0 24 24" fill="none" overflow="visible" aria-hidden="true">
      {ICONS[name]}
    </svg>
  );
}

/* "|" is a separator, ":" a grip, "v" a drop-down arrow, "x" a greyed-out arrow;
   a leading "-" greys a tool out and a leading "*" marks it pressed. */
function Tools({ items }) {
  return items.map((item, i) => {
    if (item === "|") return <Separator key={i} />;
    if (item === ":") return <Grip key={i} />;
    if (item === "v" || item === "x")
      return <ArrowButton key={i} disabled={item === "x"} aria-label="More"><Triangle /></ArrowButton>;
    const name = item.replace(/^[-*]/, "");
    return (
      <Cell key={i}>
        <ToolButton $active={item[0] === "*"} disabled={item[0] === "-"} aria-label={name}>
          <Icon name={name} />
        </ToolButton>
      </Cell>
    );
  });
}

const NAV_TOOLS = ":,*hand,panSel,zoomIn,zoomOut,zoomFull,zoomSel,zoomLayer,-zoomNative,zoomLast,-zoomNext,newMap,new3d,newBookmark,bookmarks,clock,refresh,:,identify,table,abacus,*gear,sigma,measure,v,tip,-runAction,x,textNote,v".split(",");
const EDIT_TOOLS = "|,:,-pencils,pencil,-save,-blob,-vertex,x,-editForm,-trash,-cut,-copy,-paste,-undo,-redo,:,label,diagram,|,labelPin,labelRed,|,-dimPin,-dimEye,-dimMove,-dimRotate,-dimEdit,:,globeAdd,*globeSearch,globeCar,:,python,:,help,:,sheet".split(",");
const SELECT_TOOLS = "x,:,select,v,selectForm,v,deselect,v,selectLoc".split(",");

/* ---------- map ---------- */

function makeRandom(seed) {
  let s = seed;
  return () => {
    s = (s * 16807) % 2147483647;
    return s / 2147483647 - 0.5;
  };
}

/* Adds small bends to each edge so that a coast looks ragged. */
function coast(text, amp = 3, seed = 7, closed = true) {
  const pts = text.trim().split(/\s+/).map((p) => p.split(",").map(Number));
  const rnd = makeRandom(seed);
  const out = [];
  const n = closed ? pts.length : pts.length - 1;
  for (let i = 0; i < n; i += 1) {
    const [ax, ay] = pts[i];
    const [bx, by] = pts[(i + 1) % pts.length];
    const steps = Math.max(1, Math.round(Math.hypot(bx - ax, by - ay) / 8));
    out.push([ax, ay]);
    for (let k = 1; k < steps; k += 1) {
      const t = k / steps;
      out.push([ax + (bx - ax) * t + rnd() * amp * 2, ay + (by - ay) * t + rnd() * amp * 2]);
    }
  }
  if (!closed) out.push(pts[pts.length - 1]);
  return "M" + out.map((p) => p[0].toFixed(1) + " " + p[1].toFixed(1)).join("L") + (closed ? "Z" : "");
}

const Land = ({ d, amp, seed, fill = "#90512d" }) => (
  <path d={coast(d, amp, seed)} fill={fill} stroke="#222" strokeWidth="4" strokeLinejoin="round" />
);
const Shore = ({ d, amp = 2, seed = 3, width = 4, color = "#222" }) => (
  <path d={coast(d, amp, seed, false)} fill="none" stroke={color} strokeWidth={width} strokeLinejoin="round" strokeLinecap="round" />
);
const Fjord = ({ d, width, seed }) => (
  <>
    <Shore d={d} width={width + 7} amp={4} seed={seed} />
    <Shore d={d} width={width} amp={4} seed={seed} color="#fff" />
  </>
);

function Specks({ x, y, w, h, count, seed, slope = 0 }) {
  const rnd = makeRandom(seed);
  return Array.from({ length: count }, (_, i) => {
    const px = x + (rnd() + 0.5) * w;
    const py = y + (rnd() + 0.5) * h + (px - x) * slope;
    return <path key={i} d={`M${px} ${py}l${rnd() * 14} ${rnd() * 12}l${rnd() * 10} ${rnd() * 12}`} stroke="#222" strokeWidth="4" fill="#90512d" />;
  });
}

function MapDrawing() {
  return (
    <svg width="1338" height="806" viewBox="54 131 1338 806" fill="none" role="img" aria-label="Map">
      <g transform="translate(150 220) scale(.33333)">
        <Land amp={0.5} d="575,22 610,32 610,160 590,147 572,138 565,122 550,106 527,94 556,86 568,60" />
        <Land amp={0.8} d="610,386 560,398 510,418 470,435 430,457 405,467 375,472 364,486 372,498 387,510 400,528 425,538 440,547 448,552 462,552 466,563 458,572 452,582 440,585 432,584 437,600 446,610 450,628 443,640 444,660 465,675 500,690 525,703 540,707 560,697 580,692 610,697" />
        <path d="M433 556Q420 568 428 580L438 584" stroke="#222" strokeWidth="5" />
        <g strokeLinejoin="round">
          <Land amp={3} fill="#6d7c80" d="435,487 446,480 460,480 464,488 452,492 444,500 436,499" />
          <Land amp={3} fill="#6d7c80" d="470,463 482,458 484,470 497,474 486,488 470,495 466,486 474,480" />
          <Land amp={3} fill="#6d7c80" d="508,443 518,443 520,462 528,460 530,446 538,460 562,466 560,478 545,470 530,473 508,466" />
          <Land amp={5} seed={11} fill="#6d7c80" d="567,430 570,414 582,402 594,398 612,396 612,422 596,432 590,440 578,436" />
          <Land amp={4} seed={15} fill="#6d7c80" d="563,472 572,455 590,448 612,436 612,450 594,458 580,470" />
        </g>
        <path d="M309 446l8 0l-2 10l-7-2zM319 456l4 3M345 583l4 4M346 587l3-3M451 681l3 5M234 859l3 1" stroke="#222" strokeWidth="5" />
        <Land amp={1.5} d="68,706 74,712 73,727 90,740 110,750 130,742 150,741 164,750 168,766 164,780 180,790 195,797 198,808 240,820 250,830 237,849 215,838 190,845 182,855 180,864 170,866 165,848 155,832 140,820 138,805 120,785 95,772 68,781 50,770 47,752 52,733 64,722" />
      </g>
      <g transform="translate(220 500) scale(.33333)">
        <Land amp={1.5} d="400,82 382,78 370,62 350,53 328,58 312,76 295,95 288,120 286,145 270,155 240,182 208,215 206,235 210,248 180,250 168,265 163,295 185,296 188,310 178,318 180,328 192,338 193,362 212,370 216,362 228,372 230,390 228,420 222,438 192,450 194,458 216,462 222,460 210,472 225,495 240,500 250,525 270,550 268,568 285,580 330,586 365,574 388,566 400,566" />
        <path d="M172 256L190 272H166Z" fill="#fff" stroke="#222" strokeWidth="3" />
        <path d="M272 142l14 0l-2 10l-12-4zM189 213l-3 10M186 230l-2 12M256 548l4 20l6 14M274 597l6 3M378 70l8 14" stroke="#222" strokeWidth="6" />
        <Shore amp={2} d="222,385 218,392 240,394 268,402 292,396 296,376 315,366 316,346 345,350 362,332 392,338" />
        <Land amp={3} d="30,472 68,480 82,470 110,462 130,466 140,480 162,486 158,510 164,538 140,546 118,550 112,560 104,548 80,540 55,515 36,495" />
      </g>
      <g transform="translate(54 560) scale(.33333)">
        <Land amp={2} d="124,122 134,126 142,150 158,162 176,188 172,194 150,182 138,160 126,142" />
        <Land amp={2} d="190,696 208,690 230,694 214,702 206,712" />
        <Land amp={2} d="224,794 238,790 246,800 236,808" />
      </g>
      <g transform="translate(260 825) scale(.33333)">
        <Land amp={1} d="427,152 388,180 372,208 363,225 372,238 386,248 380,258 362,246 345,234 340,246 350,262 335,256 322,222 290,222 240,240 205,265 186,290 152,303 110,334 150,345 168,314 182,345 225,345 245,318 262,290 265,275 290,273 275,305 300,312 330,300 345,290 372,292 388,272 410,262 430,255 421,246 430,180" />
        <Land amp={1.2} seed={4} d="640,0 600,16 575,32 548,62 537,85 536,113 524,114 510,104 470,126 427,150 430,178 427,232 421,246 460,250 500,246 522,232 545,212 532,190 550,178 570,160 610,148 640,138 628,115 650,122 680,112 700,95 715,85 730,66 750,40 760,18 760,0" />
        <Shore d="755,14 722,22 712,42 700,62 728,66" />
        <Fjord d="744,26 728,38" width={4} seed={4} />
        <Land amp={3} d="868,0 865,45 882,60 884,95 905,115 920,92 942,75 948,84 918,130 935,132 960,98 985,70 1010,72 1000,88 985,92 975,78 1000,55 1040,44 1035,32 1010,42 1020,22 1065,24 1068,0" />
        <Shore d="935,14 940,40 955,52" width={7} />
        <Fjord d="890,84 904,78 914,82" width={3} seed={4} />
        <Land amp={3} d="860,180 872,164 888,160 880,172 864,186" />
        <Land amp={3} d="895,162 920,155 935,165 915,172 900,170" />
        <Land amp={3} d="648,157 658,152 672,158 655,163" />
        <Land amp={2} d="776,274 788,262 790,282 778,280" />
        <Land amp={3} d="578,158 595,150 602,160 590,164" />
        <Land amp={4} d="328,318 345,312 375,324 370,345 330,345" />
        <Land amp={4} d="120,330 160,318 180,345 110,345" />
        <Land amp={3} d="50,336 80,330 110,336 100,345 50,345" />
        <Fjord d="160,296 185,290" width={5} seed={5} />
        <Specks x={430} y={252} w={100} h={36} count={18} seed={9} slope={-0.2} />
        <Specks x={525} y={190} w={50} h={36} count={18} seed={19} />
        <Specks x={600} y={140} w={130} h={18} count={20} seed={29} slope={-0.5} />
        <Specks x={330} y={300} w={90} h={34} count={14} seed={39} />
        <Specks x={240} y={326} w={90} h={14} count={9} seed={49} />
        <path d="M688 212l2 8M693 230l5 2l-2 12M598 185l4 4M606 198l2 2M129 284l4 2M912 142h14M1066 36l2 2" stroke="#222" strokeWidth="7" />
      </g>
      <g transform="translate(1100 720) scale(.33333)">
        <Land amp={1.5} d="130,60 152,60 180,80 182,102 207,105 212,130 235,135 247,160 265,155 320,168 350,172 378,185 412,184 427,205 425,235 438,262 462,298 455,350 440,398 420,400 400,380 385,350 380,398 362,394 335,370 322,374 318,390 326,430 320,447 290,440 272,428 268,462 245,458 205,412 180,400 166,408 140,380 150,345 130,345" />
        <Fjord d="160,240 190,255 215,275 245,290 285,325 300,350 322,388" width={11} seed={5} />
        <Fjord d="325,238 362,265 382,300 376,345 386,385" width={3} seed={8} />
        <Fjord d="152,155 182,168" width={5} seed={5} />
        <Fjord d="200,178 196,205 200,235" width={5} seed={6} />
        <Fjord d="150,210 190,206" width={3} seed={6} />
        <Fjord d="280,258 298,275 298,325" width={5} seed={12} />
        <Fjord d="250,262 262,290 284,312" width={2} seed={17} />
        <Fjord d="160,350 180,372 178,398" width={5} seed={17} />
        <Fjord d="250,398 280,425 278,440" width={4} seed={18} />
        <Fjord d="330,340 350,352 382,352" width={2} seed={18} />
        <Shore d="320,168 328,190 310,210 306,235" />
        <Shore d="205,192 250,205 262,218 290,214" />
        <Shore d="220,215 250,230 285,240 325,232" width={5} />
        <Shore d="258,225 262,260 250,270" width={5} />
        <Shore d="395,252 375,275 372,290" />
        <Shore d="415,315 412,345 390,352" />
        <Shore d="450,345 432,380 425,395" width={6} />
        <Shore d="312,300 322,330 350,345" width={5} />
        <Shore d="340,295 345,320 362,320" />
        <Shore d="230,320 255,330 285,340" width={6} />
        <Shore d="240,365 270,370 300,380" width={5} />
        <Specks x={152} y={170} w={40} h={60} count={12} seed={2} />
        <Specks x={210} y={200} w={90} h={70} count={30} seed={12} />
        <Specks x={145} y={330} w={50} h={70} count={40} seed={22} />
        <Specks x={200} y={385} w={120} h={50} count={60} seed={32} slope={0.15} />
        <Specks x={235} y={340} w={80} h={50} count={30} seed={42} />
        <Specks x={330} y={345} w={50} h={48} count={18} seed={52} />
        <path d="M188 462l10 16M52 341h6M78 338l8 0M386 407l2 2" stroke="#222" strokeWidth="6" />
      </g>
    </svg>
  );
}

/* ---------- left dock ---------- */

function EyeIcon({ blue }) {
  return (
    <svg width="16" height="16" viewBox="0 0 16 16" aria-hidden="true">
      <path d="M1 8Q8 1 15 8Q8 15 1 8Z" fill="#e8e8e8" stroke="#b0b0b0" />
      <text x="8" y="13" fontSize="13" fontWeight="700" fontFamily="DejaVu Sans, sans-serif" textAnchor="middle" fill={blue ? "#3c6c98" : "#555"}>?</text>
    </svg>
  );
}

function ChipIcon() {
  return (
    <svg width="14" height="12" viewBox="0 0 14 12" fill="none" stroke="#777" aria-hidden="true">
      <rect x="1.5" y="3.5" width="11" height="5" rx="1" fill="#fff" />
      <path d="M3.5 1V3M6 1V3M8.5 1V3M11 1V3M3.5 9V11M6 9V11M8.5 9V11M11 9V11" />
    </svg>
  );
}

const LAYER_FLAGS = ["eye", "blue", "eye", "", "", "chip", "eye", "chip", "eye", "eye", "eye", "chip", "eye"];

function LeftDock() {
  return (
    <Dock $width={53}>
      <LeftDockRow>
        <LeftDockColumn>
          <DockHeader $height={51} $top={5}><DockButtons /></DockHeader>
          <TreeFrame $height={411}>
            <TreeBody $top={286}><SelectedStub /></TreeBody>
            <ScrollBar before={81} thumb={161} after={134} />
          </TreeFrame>
          <DockHeader $height={57} $top={11}>
            <DockButtons />
            <svg width="4" height="24" viewBox="0 0 4 24" aria-hidden="true">
              <path d="M1 0V8" stroke="#888" strokeWidth="2" />
              <path d="M0 8H2.5V11.5H0" fill="none" stroke="#e03030" strokeWidth="1.5" />
            </svg>
          </DockHeader>
          <TreeFrame>
            <TreeBody>
              {LAYER_FLAGS.map((flag, i) => (
                <AlgRow key={i} $selected={flag === "blue"}>
                  {flag && (
                    <AlgButton aria-label="Layer indicator">
                      {flag === "chip" ? <ChipIcon /> : <EyeIcon blue={flag === "blue"} />}
                    </AlgButton>
                  )}
                </AlgRow>
              ))}
            </TreeBody>
            <ScrollBar before={47} thumb={224} after={0} hideDown />
          </TreeFrame>
        </LeftDockColumn>
        <SplitterDots $left={4} />
      </LeftDockRow>
    </Dock>
  );
}

/* ---------- right dock ---------- */

function RightDock() {
  return (
    <Dock $width={69}>
      <DockHeader $height={23} $top={2} $left={11}><DockTitle>Algorytmy</DockTitle></DockHeader>
      <IconRow>
        <svg width="18" height="18" viewBox="0 0 18 18" aria-hidden="true">
          <path d="M6 1V11M1 6H11M2.5 2.5L9.5 9.5M9.5 2.5L2.5 9.5" stroke="#c81e1e" strokeWidth="2" />
          <circle cx="6" cy="6" r="2" fill="#efefef" stroke="#c81e1e" strokeWidth="1.6" />
          <path d="M12.5 6.5V15.5M8 11H17M9.5 8L15.5 14M15.5 8L9.5 14" stroke="#8c8c8c" strokeWidth="1.6" />
          <path d="M9 12H18L13.5 17Z" fill="#505050" />
        </svg>
        <svg width="18" height="18" viewBox="0 0 26 26" aria-hidden="true"><Python /><path d="M12 17H26L19 25Z" fill="#505050" /></svg>
        <Icon name="clock" size={18} />
      </IconRow>
      <SearchField $pad={8}>
        <svg width="12" height="12" viewBox="0 0 12 12" fill="none" stroke="#777" aria-hidden="true">
          <circle cx="5" cy="5" r="4" /><path d="M8 8L11.5 11.5" strokeWidth="1.5" />
        </svg>
        <BareInput aria-label="Search algorithms" placeholder="Szukaj" />
      </SearchField>
      <Providers>
        <Provider><RightTriangle /><Icon name="clock" size={20} />O</Provider>
        {["B", "In", "K", "K", "P"].map((name, i) => (
          <Provider key={i}><RightTriangle /><QLogo />{name}</Provider>
        ))}
      </Providers>
      <DockHeader $height={26} $top={7} $left={11}><DockTitle>Search Q</DockTitle></DockHeader>
      <SearchField $pad={2}><BareInput aria-label="Search string" placeholder="Search str" /></SearchField>
      <Results />
      <LogTab>
        <svg width="10" height="6" viewBox="0 0 10 6" aria-hidden="true"><path d="M5 0L7.5 3L9 6H1L2.5 3Z" fill="#f39a1c" /></svg>
      </LogTab>
    </Dock>
  );
}

/* ---------- dialog ---------- */

const FIELDS = ["max", "median", "min", "stand.dev.", "sum", "unique", "variance"];

function SizeGrip() {
  return (
    <svg width="12" height="14" viewBox="0 0 12 14" aria-hidden="true">
      {[[9, 1], [9, 4], [9, 7], [9, 10], [6, 4], [6, 7], [6, 10], [3, 7], [3, 10], [0, 10]].map(([x, y]) => (
        <rect key={`${x}-${y}`} x={x} y={y} width="1" height="1" fill="#b4b4b4" />
      ))}
    </svg>
  );
}

function GroupStats() {
  return (
    <Dialog aria-label="Group Stats">
      <TitleBar>
        <QLogo size={21} />
        <DialogTitle>Group Stats</DialogTitle>
        <WindowActions>
          <WindowButton aria-label="Minimize"><svg width="12" height="12" viewBox="0 0 12 12"><path d="M0 5.5H12" stroke="#000" /></svg></WindowButton>
          <WindowButton aria-label="Maximize"><svg width="12" height="12" viewBox="0 0 12 12"><rect x=".5" y=".5" width="11" height="11" fill="none" stroke="#000" /></svg></WindowButton>
          <WindowButton aria-label="Close window"><svg width="12" height="12" viewBox="0 0 12 12"><path d="M0 0L12 12M12 0L0 12" stroke="#000" /></svg></WindowButton>
        </WindowActions>
      </TitleBar>
      <DialogMenu>
        <DialogMenuItem href="#data"><u>D</u>ata</DialogMenuItem>
        <DialogMenuItem href="#features">Feat<u>u</u>res</DialogMenuItem>
        <DialogMenuItem href="#window">W<u>i</u>ndow</DialogMenuItem>
        <DialogMenuItem href="#help">He<u>l</u>p</DialogMenuItem>
      </DialogMenu>
      <Workspace>
        <TableFrame>
          <StatsTable>
            <thead>
              <tr>
                <CornerHead />
                <ColHead $width={43} scope="col"><HeadContent>1 <Triangle up /></HeadContent></ColHead>
                <ColHead $width={58} $last scope="col"><PlainHead>2</PlainHead></ColHead>
              </tr>
            </thead>
            <tbody>
              <tr>
                <RowHead scope="row"><RowHeadContent>1<Triangle small /></RowHeadContent></RowHead>
                <DataCell $tinted />
                <DataCell $tinted />
              </tr>
              <tr>
                <RowHead scope="row"><PlainHead>2</PlainHead></RowHead>
                <DataCell $tinted />
                <DataCell><PlainHead>24719,8</PlainHead></DataCell>
              </tr>
            </tbody>
          </StatsTable>
        </TableFrame>
        <SplitterDots $left={15} />
        <ControlPanel>
          <PanelHeader>
            <DockTitle>Control panel</DockTitle>
            <PanelActions><DockButtons /></PanelActions>
          </PanelHeader>
          <PanelForm onSubmit={(e) => e.preventDefault()}>
            <Caption htmlFor="layer">Layers</Caption>
            <SelectWrap>
              <LayerSelect id="layer" defaultValue="swamp"><option>swamp</option></LayerSelect>
              <SelectArrow><Triangle /></SelectArrow>
            </SelectWrap>
            <Caption as="span">Fields</Caption>
            <FieldsFrame>
              <FieldList>
                {FIELDS.map((name) => (
                  <Field key={name} $selected={name === "sum"}><Bars tinted={name === "sum"} />{name}</Field>
                ))}
              </FieldList>
              <ScrollBar before={114} thumb={89} after={0} />
            </FieldsFrame>
            <DropGrid>
              <DropHead $height={30} $below={6}><PushButton type="button" $width={45} $height={24}>Filter</PushButton></DropHead>
              <DropHead $height={30} $below={6}>Columns</DropHead>
              <DropBox />
              <DropBox />
              <DropHead $height={36}>Rows</DropHead>
              <DropHead $height={36}>Value<CheckLabel><Check type="checkbox" />use NULL values</CheckLabel></DropHead>
              <DropBox />
              <DropBox>
                <Field><Bars />sum</Field>
                <Field><Pie />areakm2</Field>
              </DropBox>
            </DropGrid>
            <OptionRow>
              <CheckLabel><Check type="checkbox" />Use only selected features</CheckLabel>
              <PushButton type="button" $width={80}>Clear</PushButton>
            </OptionRow>
            <PushButton type="button">Calculate</PushButton>
          </PanelForm>
        </ControlPanel>
      </Workspace>
      <StatusBar>
        Calculate... 100% |  generate view...100% |  done.
        <SizeGrip />
      </StatusBar>
    </Dialog>
  );
}

export default function App() {
  return (
    <>
      <GlobalStyle />
      <Desktop>
        <AppMenu>
          <ClippedMenuItem href="#warstwa">Warstwa</ClippedMenuItem>
          <AppMenuItem href="#ustawienia"><u>U</u>stawienia</AppMenuItem>
          <AppMenuItem href="#wtyczki"><u>W</u>tyczki</AppMenuItem>
          <AppMenuItem href="#wektor">Wekt<u>o</u>r</AppMenuItem>
          <AppMenuItem href="#raster"><u>R</u>aster</AppMenuItem>
          <AppMenuItem href="#bazy"><u>B</u>azy danych</AppMenuItem>
          <AppMenuItem href="#internet">W <u>i</u>nternecie</AppMenuItem>
          <AppMenuItem href="#siatka">Siatka</AppMenuItem>
          <AppMenuItem href="#processing">Pro<u>c</u>essing</AppMenuItem>
          <AppMenuItem href="#pomoc"><u>P</u>omoc</AppMenuItem>
        </AppMenu>
        <Toolbar $inset={2}><Tools items={NAV_TOOLS} /></Toolbar>
        <Toolbar>
          <Cell $clip={10}><ToolButton aria-label="newLayer"><Icon name="newLayer" /></ToolButton></Cell>
          <Tools items={EDIT_TOOLS} />
        </Toolbar>
        <Toolbar $height={38}>
          <Cell $clip={29}><ToolButton disabled aria-label="polygon"><Icon name="polygon" /></ToolButton></Cell>
          <Tools items={SELECT_TOOLS} />
        </Toolbar>
        <Body>
          <LeftDock />
          <MapCanvas><MapDrawing /></MapCanvas>
          <RightDock />
        </Body>
        <GroupStats />
      </Desktop>
    </>
  );
}
